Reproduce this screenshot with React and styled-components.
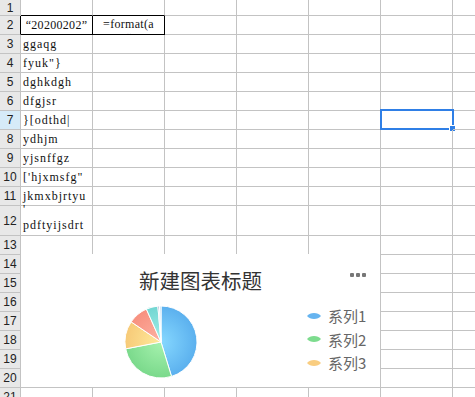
import React from "react";
import styled, { createGlobalStyle } from "styled-components";

const GlobalStyle = createGlobalStyle`
  html, body {
    margin: 0;
    padding: 0;
    background: #fff;
    overflow: hidden;
  }
`;

const rowHeights = [16, 19, 19, 19, 19, 19, 19, 19, 19, 19, 19, 30, 19, 19, 19, 19, 19, 19, 19, 19, 19];

const cells = {
  2: ["“20200202”", "=format(a\n“"],
  3: ["ggaqg"],
  4: ["fyuk\"}"],
  5: ["dghkdgh"],
  6: ["dfgjsr"],
  7: ["}[odthd|"],
  8: ["ydhjm"],
  9: ["yjsnffgz"],
  10: ["['hjxmsfg\""],
  11: ["jkmxbjrtyu"],
  12: ["'\npdftyijsdrt"],
};

const slices = [
  { from: 0, to: 163, edge: "#5bb0ee", mid: "#86d8ff" },
  { from: 163, to: 259, edge: "#7ad98b", mid: "#a6f2ae" },
  { from: 259, to: 304, edge: "#f7ca78", mid: "#feea9c" },
  { from: 304, to: 336, edge: "#f7907f", mid: "#fdb2a3" },
  { from: 336, to: 355, edge: "#72d6d2", mid: "#a4efe9" },
  { from: 355, to: 357.5, edge: "#9aa0c6", mid: "#b8bde0" },
  { from: 357.5, to: 360, edge: "#aad6f2", mid: "#d0ecfb" },
];

const legend = [
  { label: "系列1", color: "#66b4f0" },
  { label: "系列2", color: "#7ddc8e" },
  { label: "系列3", color: "#f9cd80" },
];

function point(deg, r) {
  const a = (deg * Math.PI) / 180;
  return [r * Math.sin(a), -r * Math.cos(a)];
}

function slicePath(from, to, r) {
  const [x1, y1] = point(from, r);
  const [x2, y2] = point(to, r);
  const large = to - from > 180 ? 1 : 0;
  return `M0 0 L${x1.toFixed(2)} ${y1.toFixed(2)} A${r} ${r} 0 ${large} 1 ${x2.toFixed(2)} ${y2.toFixed(2)} Z`;
}

function Pie() {
  const r = 36;
  return (
    <svg width="80" height="80" viewBox="-40 -40 80 80">
      <defs>
        {slices.map((s, i) => (
          <radialGradient key={i} id={`pg${i}`} cx="0" cy="0" r={r} gradientUnits="userSpaceOnUse">
            <stop offset="0" stopColor={s.mid} />
            <stop offset="1" stopColor={s.edge} />
          </radialGradient>
        ))}
      </defs>
      {slices.map((s, i) => (
        <path key={i} d={slicePath(s.from, s.to, r)} fill={`url(#pg${i})`} stroke="#fff" strokeWidth="1" strokeLinejoin="round" />
      ))}
    </svg>
  );
}

function LegendMark({ color }) {
  return (
    <svg width="14" height="8" viewBox="0 0 14 8">
      <path d="M0 4 C3 0 11 0 14 4 C11 8 3 8 0 4 Z" fill={color} />
    </svg>
  );
}

export default function App() {
  return (
    <>
      <GlobalStyle />
      <Sheet>
        <Grid>
          {rowHeights.map((h, ri) => {
            const row = ri + 1;
            const data = cells[row] || [];
            return (
              <React.Fragment key={row}>
                <RowHead height={h} active={row === 7} boxed={row === 2}>
                  {row}
                </RowHead>
                {[0, 1, 2, 3, 4, 5, 6].map((ci) => (
                  <Cell
                    key={ci}
                    height={h}
                    boxed={row === 2 && ci < 2}
                    above={row === 1 && ci < 2}
                    center={row === 2}
                    top={row === 2 && ci === 1}
                    bottom={row === 12}
                  >
                    {data[ci] || ""}
                    {row === 7 && ci === 5 && <Selection />}
                  </Cell>
                ))}
              </React.Fragment>
            );
          })}
        </Grid>
        <Chart>
          <ChartTitle>新建图表标题</ChartTitle>
          <Dots>
            <i />
            <i />
            <i />
          </Dots>
          <ChartBody>
            <PieWrap>
              <Pie />
            </PieWrap>
            <Legend>
              {legend.map((l) => (
                <LegendItem key={l.label}>
                  <LegendMark color={l.color} />
                  <span>{l.label}</span>
                </LegendItem>
              ))}
            </Legend>
          </ChartBody>
        </Chart>
      </Sheet>
    </>
  );
}

const Sheet = styled.div`
  position: relative;
  width: 475px;
  height: 397px;
  overflow: hidden;
  background: #fff;
`;

const Grid = styled.div`
  display: grid;
  grid-template-columns: 21px repeat(7, 72px);
  width: 526px;
`;

const RowHead = styled.div`
  box-sizing: border-box;
  height: ${(p) => p.height}px;
  background: ${(p) => (p.active ? "#d6ebf8" : "#e8e8e8")};
  border-right: 1px solid ${(p) => (p.boxed ? "#000" : "#c3c3c3")};
  border-bottom: 1px solid #c3c3c3;
  display: flex;
  align-items: center;
  justify-content: center;
  font-family: "Liberation Sans", Arial, sans-serif;
  font-size: 12px;
  color: #222;
`;

const Cell = styled.div`
  box-sizing: border-box;
  position: relative;
  height: ${(p) => p.height}px;
  border-right: 1px solid ${(p) => (p.boxed ? "#000" : "#c3c3c3")};
  border-bottom: 1px solid ${(p) => (p.boxed || p.above ? "#000" : "#c3c3c3")};
  padding: ${(p) => (p.top ? "1px 2px 0" : p.bottom ? "0 2px 2px" : "0 2px")};
  display: flex;
  align-items: ${(p) => (p.top ? "flex-start" : p.bottom ? "flex-end" : "center")};
  justify-content: ${(p) => (p.center ? "center" : "flex-start")};
  text-align: ${(p) => (p.center ? "center" : "left")};
  white-space: pre;
  overflow: ${(p) => (p.top ? "hidden" : "visible")};
  font-family: "Liberation Serif", "Times New Roman", serif;
  font-size: 12px;
  letter-spacing: ${(p) => (p.center ? "0.3px" : "1px")};
  line-height: ${(p) => (p.bottom ? "16px" : "14px")};
  color: #111;
`;

const Selection = styled.span`
  position: absolute;
  inset: -2px -2px -1px -1px;
  border: 2px solid #2f7fe6;
  pointer-events: none;
  &::after {
    content: "";
    position: absolute;
    right: -4px;
    bottom: -4px;
    width: 5px;
    height: 5px;
    background: #2f7fe6;
    border: 1px solid #fff;
  }
`;

const Chart = styled.div`
  position: absolute;
  left: 21px;
  top: 254px;
  width: 359px;
  height: 133px;
  background: #fff;
  display: flex;
  flex-direction: column;
`;

const ChartTitle = styled.div`
  margin-top: 12px;
  text-align: center;
  font-family: "Noto Sans CJK SC", "Noto Sans", sans-serif;
  font-size: 20.5px;
  line-height: 28px;
  color: #333;
`;

const Dots = styled.div`
  position: absolute;
  top: 19px;
  right: 14px;
  display: flex;
  gap: 2px;
  & i {
    width: 4px;
    height: 4px;
    border-radius: 1px;
    background: #777;
  }
`;

const ChartBody = styled.div`
  display: flex;
  align-items: flex-start;
  flex: 1;
`;

const PieWrap = styled.div`
  margin-left: 100px;
  margin-top: 8px;
  width: 80px;
  height: 80px;
`;

const Legend = styled.div`
  margin-left: 106px;
  margin-top: 11px;
  display: flex;
  flex-direction: column;
  gap: 2px;
`;

const LegendItem = styled.div`
  display: flex;
  align-items: center;
  gap: 7px;
  height: 21.5px;
  font-family: "Noto Sans CJK SC", "Noto Sans", sans-serif;
  font-size: 15px;
  color: #666;
`;
